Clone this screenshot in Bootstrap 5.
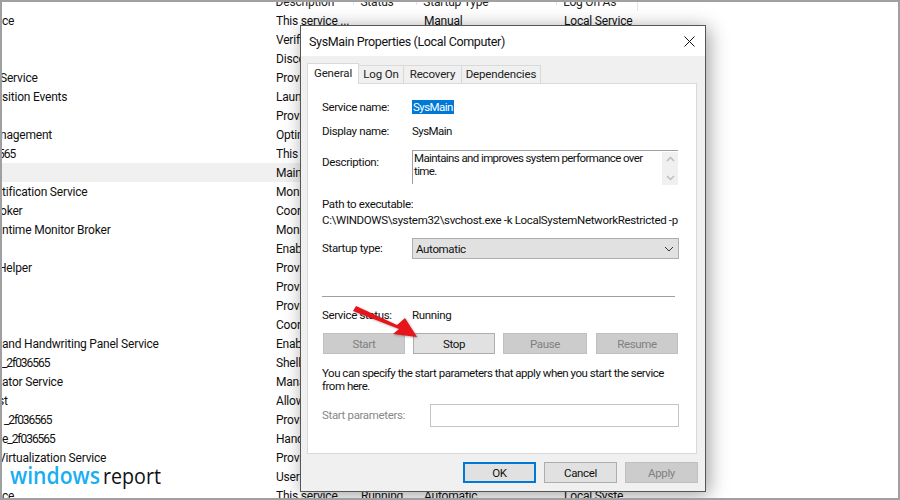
<!DOCTYPE html>
<html lang="en">
<head>
<meta charset="utf-8">
<title>SysMain Properties</title>
<link href="https://cdn.jsdelivr.net/npm/bootstrap@5.3.0/dist/css/bootstrap.min.css" rel="stylesheet">
<style>
html,body{margin:0;height:500px;overflow:hidden;background:#fff}
body{font-family:Roboto,"Noto Sans",sans-serif;font-size:12px;color:#111;letter-spacing:-.2px}
.screen{height:500px;width:900px;position:relative;overflow:hidden;border:2px solid #a0a0a0;background:#fff}
.head-row{height:9px;width:636px;overflow:hidden;border-right:1px solid #e5e5e5;color:#222}
.head-row>div{line-height:1;height:9px;margin-top:-6px;border-right:1px solid #e5e5e5;padding-left:6px;white-space:nowrap}
.hc-name{width:268px;border:0!important}.hc-desc{width:85px}.hc-status{width:63px}.hc-type{width:140px}.hc-log{width:80px;border:0!important}
.svc-row{height:19px;line-height:21px;white-space:nowrap;width:636px;overflow:hidden}
.svc-row.picked{background:#f0f0f0}
.c-name{width:274px;flex:none;overflow:hidden}
.c-desc{width:85px;flex:none;overflow:hidden}
.c-clip{width:26px}
.c-status{width:63px;flex:none}
.c-type{width:140px;flex:none}
.c-log{flex:none}
.cut{margin-left:-2px;width:276px}
.cut-more{margin-left:-4px;width:278px}
.hash{letter-spacing:-1.05px}
.nudge{padding-left:2px}
.logo{position:absolute;left:8px;top:463px;width:156px;height:28px}
.logo text{font-family:"Open Sans",sans-serif;letter-spacing:0}
.logo .blue{font-weight:600}
.dlg{position:absolute;left:298px;top:23px;width:406px;height:467px;background:#f0f0f0;border:1px solid #555;box-shadow:3px 3px 18px rgba(0,0,0,.38);font-size:11.5px;letter-spacing:-.35px}
.dlg-title{height:30px;background:#fff;padding-left:8px;font-size:12.5px;line-height:31px;letter-spacing:-.35px}
.dlg-x{margin-right:10px}
.tabstrip{height:27px;padding:7px 0 0 6px;align-items:flex-end}
.tabx{height:18px;line-height:17px;background:#f0f0f0;border:1px solid #d9d9d9;border-bottom:0;border-left:0;text-align:center;color:#222;white-space:nowrap;letter-spacing:-.15px}
.tabx.on{height:21px;background:#fff;border-left:1px solid #d9d9d9;line-height:18px;position:relative;margin-bottom:-1px;z-index:1;padding-bottom:3px}
.t1{width:52px}.t2{width:45px}.t3{width:58px}.t4{width:79px}
.pane{margin-left:6px;width:390px;height:371px;background:#fff;border:1px solid #d9d9d9;padding:0 0 0 14px}
.f-row{line-height:16px;height:16px;white-space:nowrap}
.lbl{width:90px;flex:none}
.sel-txt{background:#0078d7;color:#fff;height:14px;line-height:14px;margin-top:1px;padding:0 1px;letter-spacing:-.55px}
.plain-name{letter-spacing:-.55px}
.mt-a{margin-top:15px}.mt-b{margin-top:8px}
.desc-row{margin-top:11px;height:34px}
.desc-lbl{padding-top:4px}
.desc-box{width:266px;height:34px;border-top:1px solid #a0a0a0;border-left:1px solid #a0a0a0;line-height:13px;padding:1px 0 0 1px}
.desc-txt{width:246px;letter-spacing:-.6px}
.sbar{width:16px;height:33px;background:#f0f0f0}
.mt-path{margin-top:12px}
.path-line{letter-spacing:-.33px}
.combo-row{margin-top:10px;height:21px;line-height:21px}
.combo{width:267px;height:21px;background:#e1e1e1;border:1px solid #adadad;padding:0 4px 0 3px;line-height:20px}
.combo-lbl{line-height:20px}
.rule{height:1px;width:353px;background:#a0a0a0;margin-top:37px}
.mt-st{margin-top:10px}
.acts{margin-top:10px;height:21px;width:356px;padding-left:1px}
.wbtn{height:21px;padding:0;font-size:11.5px;line-height:18px;border-radius:0;font-family:inherit;letter-spacing:inherit;color:#111;background:#e1e1e1;border:1px solid #adadad}
.wbtn.off{background:#ccc;border-color:#bfbfbf;color:#808080;opacity:1}
.b-a{width:82px}.b-b{width:84px}.b-c{width:82px;margin-left:1px}
.note{margin-top:13px;line-height:13px;width:356px;letter-spacing:-.48px}
.param{margin-top:11px;height:23px;line-height:23px;color:#888}
.param .lbl{width:108px}
.pbox{width:249px;height:23px;background:#fff;border:1px solid #c4c4c4}
.foot{width:397px;padding-top:8px}
.b-f{width:73px}
.b-ok{border:2px solid #0078d7;line-height:16px}
.arrow{position:absolute;left:348px;top:302px;width:72px;height:40px;filter:drop-shadow(1px 1px 1px rgba(0,0,0,.3))}
</style>
</head>
<body>
<div class="screen">
  <div class="head-row d-flex">
    <div class="hc-name"></div><div class="hc-desc">Description</div><div class="hc-status">Status</div><div class="hc-type">Startup Type</div><div class="hc-log">Log On As</div>
  </div>
  <div class="svc-row d-flex"><div class="c-name">ce</div><div class="c-desc">This service ...</div><div class="c-status"></div><div class="c-type">Manual</div><div class="c-log">Local Service</div></div>
  <div class="svc-row d-flex"><div class="c-name"></div><div class="c-desc c-clip">Verifies</div></div>
  <div class="svc-row d-flex"><div class="c-name"></div><div class="c-desc c-clip">Discovers</div></div>
  <div class="svc-row d-flex"><div class="c-name cut">Service</div><div class="c-desc c-clip">Provides</div></div>
  <div class="svc-row d-flex"><div class="c-name">sition Events</div><div class="c-desc c-clip">Launches</div></div>
  <div class="svc-row d-flex"><div class="c-name"></div><div class="c-desc c-clip">Provides</div></div>
  <div class="svc-row d-flex"><div class="c-name cut">nagement</div><div class="c-desc c-clip">Optimizes</div></div>
  <div class="svc-row d-flex"><div class="c-name cut-more hash">565</div><div class="c-desc c-clip">This service</div></div>
  <div class="svc-row picked d-flex"><div class="c-name"></div><div class="c-desc c-clip">Maintains</div></div>
  <div class="svc-row d-flex"><div class="c-name">tification Service</div><div class="c-desc c-clip">Monitors</div></div>
  <div class="svc-row d-flex"><div class="c-name cut">oker</div><div class="c-desc c-clip">Coordinates</div></div>
  <div class="svc-row d-flex"><div class="c-name">ntime Monitor Broker</div><div class="c-desc c-clip">Monitors</div></div>
  <div class="svc-row d-flex"><div class="c-name"></div><div class="c-desc c-clip">Enables</div></div>
  <div class="svc-row d-flex"><div class="c-name cut-more">Helper</div><div class="c-desc c-clip">Provides</div></div>
  <div class="svc-row d-flex"><div class="c-name"></div><div class="c-desc c-clip">Provides</div></div>
  <div class="svc-row d-flex"><div class="c-name"></div><div class="c-desc c-clip">Provides</div></div>
  <div class="svc-row d-flex"><div class="c-name"></div><div class="c-desc c-clip">Coordinates</div></div>
  <div class="svc-row d-flex"><div class="c-name">and Handwriting Panel Service</div><div class="c-desc c-clip">Enables</div></div>
  <div class="svc-row d-flex"><div class="c-name hash">_2f036565</div><div class="c-desc c-clip">Shell</div></div>
  <div class="svc-row d-flex"><div class="c-name">ator Service</div><div class="c-desc c-clip">Manages</div></div>
  <div class="svc-row d-flex"><div class="c-name cut-more">st</div><div class="c-desc c-clip">Allows</div></div>
  <div class="svc-row d-flex"><div class="c-name hash nudge">_2f036565</div><div class="c-desc c-clip">Provides</div></div>
  <div class="svc-row d-flex"><div class="c-name hash">e_2f036565</div><div class="c-desc c-clip">Handles</div></div>
  <div class="svc-row d-flex"><div class="c-name cut-more">Virtualization Service</div><div class="c-desc c-clip">Provides</div></div>
  <div class="svc-row d-flex"><div class="c-name"></div><div class="c-desc c-clip">User</div></div>
  <div class="svc-row d-flex"><div class="c-name">ce</div><div class="c-desc">This service ...</div><div class="c-status">Running</div><div class="c-type">Automatic</div><div class="c-log">Local Syste...</div></div>

  <svg class="logo" viewBox="0 0 156 28" aria-label="windows report">
    <text class="blue" x="0" y="19" font-size="22.5" fill="#18aef2" textLength="90" lengthAdjust="spacingAndGlyphs">windows</text>
    <text x="93" y="19" font-size="22.5" fill="#111" textLength="58" lengthAdjust="spacingAndGlyphs">report</text>
  </svg>

  <div class="dlg d-flex flex-column">
    <div class="dlg-title d-flex justify-content-between align-items-center">
      <span>SysMain Properties (Local Computer)</span>
      <svg class="dlg-x" width="11" height="11" viewBox="0 0 11 11"><path d="M.5.5l10 10M10.5.5l-10 10" stroke="#111" fill="none"/></svg>
    </div>
    <div class="tabstrip d-flex">
      <div class="tabx on t1">General</div><div class="tabx t2">Log On</div><div class="tabx t3">Recovery</div><div class="tabx t4">Dependencies</div>
    </div>
    <div class="pane">
      <div class="f-row d-flex mt-a"><div class="lbl">Service name:</div><div class="sel-txt">SysMain</div></div>
      <div class="f-row d-flex mt-b"><div class="lbl">Display name:</div><div class="plain-name">SysMain</div></div>
      <div class="desc-row d-flex"><div class="lbl desc-lbl">Description:</div>
        <div class="desc-box d-flex justify-content-between">
          <div class="desc-txt">Maintains and improves system performance over time.</div>
          <div class="sbar d-flex flex-column justify-content-between align-items-center py-1">
            <svg width="9" height="6" viewBox="0 0 9 6"><path d="M1 5l3.5-3.5L8 5" stroke="#bdbdbd" stroke-width="1.5" fill="none"/></svg>
            <svg width="9" height="6" viewBox="0 0 9 6"><path d="M1 1l3.5 3.5L8 1" stroke="#bdbdbd" stroke-width="1.5" fill="none"/></svg>
          </div>
        </div>
      </div>
      <div class="f-row mt-path">Path to executable:</div>
      <div class="f-row path-line">C:\WINDOWS\system32\svchost.exe -k LocalSystemNetworkRestricted -p</div>
      <div class="combo-row d-flex"><div class="lbl combo-lbl">Startup type:</div>
        <div class="combo d-flex justify-content-between align-items-center"><span>Automatic</span>
          <svg width="10" height="6" viewBox="0 0 10 6"><path d="M1 1l4 4 4-4" stroke="#333" fill="none"/></svg>
        </div>
      </div>
      <div class="rule"></div>
      <div class="f-row d-flex mt-st"><div class="lbl">Service status:</div><div>Running</div></div>
      <div class="acts d-flex gap-2">
        <button type="button" class="btn wbtn off b-a" disabled>Start</button>
        <button type="button" class="btn wbtn b-a">Stop</button>
        <button type="button" class="btn wbtn off b-b" disabled>Pause</button>
        <button type="button" class="btn wbtn off b-c" disabled>Resume</button>
      </div>
      <div class="note">You can specify the start parameters that apply when you start the service from here.</div>
      <div class="param d-flex"><div class="lbl">Start parameters:</div><div class="pbox"></div></div>
    </div>
    <div class="foot d-flex justify-content-end gap-2">
      <button type="button" class="btn wbtn b-ok b-f">OK</button>
      <button type="button" class="btn wbtn b-f">Cancel</button>
      <button type="button" class="btn wbtn off b-f" disabled>Apply</button>
    </div>
  </div>

  <svg class="arrow" viewBox="0 0 72 40"><polygon fill="#e8141c" points="6,2 47,21 55,14 67,33 43,30 49,25 3,7"/></svg>
</div>
<script src="https://cdn.jsdelivr.net/npm/bootstrap@5.3.0/dist/js/bootstrap.bundle.min.js"></script>
</body>
</html>
